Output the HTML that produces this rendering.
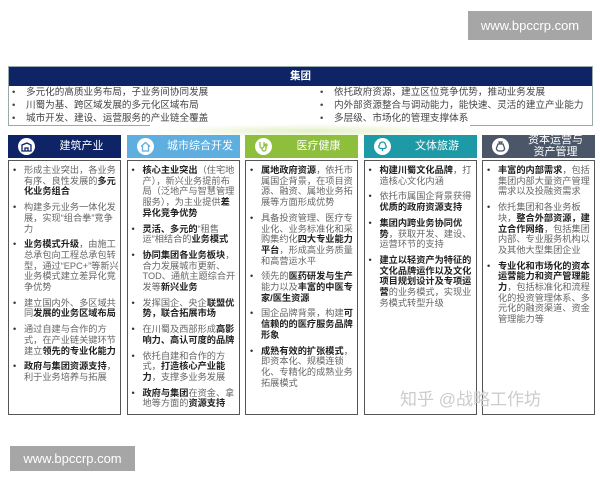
<!DOCTYPE html>
<html><head><meta charset="utf-8"><style>
*{margin:0;padding:0;box-sizing:border-box}
body{width:600px;height:480px;background:#fff;position:relative;overflow:hidden;font-family:"Liberation Sans","Noto Sans CJK SC",sans-serif;color:#555}
.wm{position:absolute;background:#a6a6a6;color:#fff;font-size:13px;display:flex;align-items:center;justify-content:center}
.group{position:absolute;left:8px;top:66px;width:585px;height:60px;border:1px solid #9aa;}
.gh{background:#0e2466;color:#fff;text-align:center;font-size:10.5px;height:19px;line-height:19px;font-weight:bold}
.gb{position:absolute;font-size:9.6px;line-height:13px;color:#444}
.gb div:before{content:"•";position:absolute;margin-left:-14px}
.glow{position:absolute;left:150px;top:124px;width:320px;height:14px;background:radial-gradient(ellipse at center,#e3f0c8 0%,#fff 70%)}
.col{position:absolute;top:135px;width:113px}
.hd{height:23px;color:#fff;font-size:11px;display:flex;align-items:center;position:relative}
.ic{width:17px;height:17px;border-radius:50%;background:#fff;position:absolute;left:10px;top:3px}
.ic svg{position:absolute;left:3px;top:3px}
.hd span{position:absolute;left:36px;right:2px;text-align:center;line-height:11.5px}
.bx{height:255px;border:1.5px solid #555;margin-top:2px;padding:4px 0 0 15px;font-size:9.2px;line-height:10.7px;color:#666}
.bx p{position:relative;margin-bottom:5px}
.bx p:before{content:"•";position:absolute;left:-11px;color:#333}
b{color:#222}
</style></head><body>
<div class="wm" style="left:468px;top:11px;width:124px;height:29px">www.bpccrp.com</div>
<div class="group"><div class="gh">集团</div></div>
<div class="gb" style="left:26px;top:86px"><div>多元化的高质业务布局，子业务间协同发展</div><div>川蜀为基、跨区域发展的多元化区域布局</div><div>城市开发、建设、运营服务的产业链全覆盖</div></div>
<div class="gb" style="left:334px;top:86px"><div>依托政府资源，建立区位竞争优势，推动业务发展</div><div>内外部资源整合与调动能力，能快速、灵活的建立产业能力</div><div>多层级、市场化的管理支撑体系</div></div>
<div class="glow"></div>

<div class="col" style="left:8px"><div class="hd" style="background:#0e2466"><div class="ic"><svg width="11" height="11" viewBox="0 0 11 11" fill="none" stroke="#0e2466" stroke-width="1.3"><path d="M1 10V4l5-2 4 2v6z M4 10V7h3v3"/></svg></div><span>建筑产业</span></div>
<div class="bx"><p>形成主业突出，各业务有序、良性发展的<b>多元化业务组合</b></p><p>构建多元业务一体化发展，实现“组合拳”竞争力</p><p><b>业务模式升级</b>，由施工总承包向工程总承包转型，通过“EPC+”等新兴业务模式建立差异化竞争优势</p><p>建立国内外、多区域共同<b>发展的业务区域布局</b></p><p>通过自建与合作的方式，在产业链关键环节建立<b>领先的专业化能力</b></p><p><b>政府与集团资源支持</b>，利于业务培养与拓展</p></div></div>

<div class="col" style="left:126.5px"><div class="hd" style="background:#5eaee0"><div class="ic"><svg width="11" height="11" viewBox="0 0 11 11" fill="none" stroke="#5eaee0" stroke-width="1.3"><path d="M1 5.5L5.5 1.5 10 5.5 M2.5 4.5V10h6V4.5"/></svg></div><span>城市综合开发</span></div>
<div class="bx"><p><b>核心主业突出</b>（住宅地产），新兴业务提前布局（泛地产与智慧管理服务），为主业提供<b>差异化竞争优势</b></p><p><b>灵活、多元的</b>“租售运”相结合的<b>业务模式</b></p><p><b>协同集团各业务板块</b>，合力发展城市更新、TOD、通航主题综合开发等<b>新兴业务</b></p><p>发挥国企、央企<b>联盟优势，联合拓展市场</b></p><p>在川蜀及西部形成<b>高影响力、高认可度的品牌</b></p><p>依托自建和合作的方式，<b>打造核心产业能力</b>，支撑多业务发展</p><p><b>政府与集团</b>在资金、拿地等方面的<b>资源支持</b></p></div></div>

<div class="col" style="left:245px"><div class="hd" style="background:#8dbf3c"><div class="ic"><svg width="11" height="11" viewBox="0 0 11 11" fill="none" stroke="#8dbf3c" stroke-width="1.3"><path d="M2 1v4a2 2 0 0 0 4 0V1 M4 7v1a2 2 0 0 0 4 0V5"/><circle cx="8" cy="4" r="1"/></svg></div><span>医疗健康</span></div>
<div class="bx"><p><b>属地政府资源</b>，依托市属国企背景，在项目资源、融资、属地业务拓展等方面形成优势</p><p>具备投资管理、医疗专业化、业务标准化和采购集约化<b>四大专业能力平台</b>，形成高业务质量和高营运水平</p><p>领先的<b>医药研发与生产</b>能力以及<b>丰富的中医专家/医生资源</b></p><p>国企品牌背景，构建<b>可信赖的的医疗服务品牌形象</b></p><p><b>成熟有效的扩张模式</b>，即资本化、规模连锁化、专精化的成熟业务拓展模式</p></div></div>

<div class="col" style="left:363.5px"><div class="hd" style="background:#1e9aa6"><div class="ic"><svg width="11" height="11" viewBox="0 0 11 11" fill="none" stroke="#1e9aa6" stroke-width="1.3"><path d="M5.5 1a3 3 0 0 0-3 3 2 2 0 0 0 1 3.5h4a2 2 0 0 0 1-3.5 3 3 0 0 0-3-3z M5.5 7.5V10"/></svg></div><span>文体旅游</span></div>
<div class="bx"><p><b>构建川蜀文化品牌</b>，打造核心文化内涵</p><p>依托市属国企背景获得<b>优质的政府资源支持</b></p><p><b>集团内跨业务协同优势</b>，获取开发、建设、运营环节的支持</p><p><b>建立以轻资产为特征的文化品牌运作以及文化项目规划设计及专项运营</b>的业务模式，实现业务模式转型升级</p></div></div>

<div class="col" style="left:482px"><div class="hd" style="background:#4b5668"><div class="ic"><svg width="11" height="11" viewBox="0 0 11 11" fill="none" stroke="#4b5668" stroke-width="1.3"><path d="M4 1h3L6 3h-1z M3 3h5l1.5 4a2.5 2.5 0 0 1-2.5 3H4a2.5 2.5 0 0 1-2.5-3z"/></svg></div><span>资本运营与<br>资产管理</span></div>
<div class="bx"><p><b>丰富的内部需求</b>，包括集团内部大量资产管理需求以及投融资需求</p><p>依托集团和各业务板块，<b>整合外部资源，建立合作网络</b>，包括集团内部、专业服务机构以及其他大型集团企业</p><p><b>专业化和市场化的资本运营能力和资产管理能力</b>，包括标准化和流程化的投资管理体系、多元化的融资渠道、资金管理能力等</p></div></div>

<div style="position:absolute;left:400px;top:385px;font-size:17px;color:#ccc">知乎 @战略工作坊</div>
<div class="wm" style="left:10px;top:446px;width:125px;height:25px">www.bpccrp.com</div>
</body></html>
